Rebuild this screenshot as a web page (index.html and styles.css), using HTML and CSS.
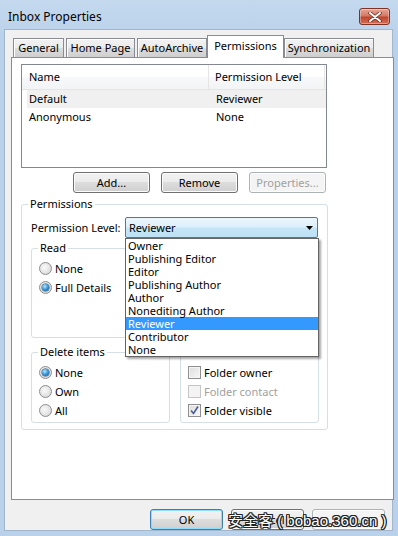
FILE: index.html
```html
<!DOCTYPE html>
<html lang="en">
  <head>
    <meta charset="UTF-8" />
    <title>Inbox Properties</title>
    <link rel="stylesheet" href="styles.css">
  </head>
  <body>
    <div class="window">
      <!-- Title bar -->
      <div class="titlebar">
        <span class="title">Inbox Properties</span>
        <div class="close">
          <svg width="14" height="10" viewBox="0 0 14 10">
            <path d="M2 1 L12 9 M12 1 L2 9" stroke="#6b2418" stroke-width="3.4" stroke-linecap="round" />
            <path d="M2 1 L12 9 M12 1 L2 9" stroke="#fff" stroke-width="2" stroke-linecap="round" />
          </svg>
        </div>
      </div>

      <div class="client">
        <!-- Tabs -->
        <div class="tabs">
          <div class="tab" style="width: 51px">General</div>
          <div class="tab" style="width: 69px">Home Page</div>
          <div class="tab" style="width: 70px">AutoArchive</div>
          <div class="tab active" style="width: 77px">Permissions</div>
          <div class="tab" style="width: 90px">Synchronization</div>
        </div>

        <div class="panel">
          <!-- Users list -->
          <div class="listview">
            <div class="lv-head">
              <div class="lv-col name">Name</div>
              <div class="lv-col level">Permission Level</div>
              <div class="lv-col rest"></div>
            </div>
            <div class="lv-row selected">
              <span class="name">Default</span><span>Reviewer</span>
            </div>
            <div class="lv-row">
              <span class="name">Anonymous</span><span>None</span>
            </div>
          </div>

          <div class="list-buttons">
            <button class="btn">Add...</button>
            <button class="btn">Remove</button>
            <button class="btn" disabled>Properties...</button>
          </div>

          <!-- Permissions -->
          <fieldset class="group perms">
            <legend>Permissions</legend>
            <div class="level-row">
              <span class="level-label">Permission Level:</span>
              <div class="combo">
                <div class="combo-box">
                  <span>Reviewer</span>
                  <svg width="7" height="4" viewBox="0 0 7 4"><path d="M0 0 H7 L3.5 4 Z" fill="#000" /></svg>
                </div>
                <ul class="combo-list">
                  <li>Owner</li>
                  <li>Publishing Editor</li>
                  <li>Editor</li>
                  <li>Publishing Author</li>
                  <li>Author</li>
                  <li>Nonediting Author</li>
                  <li class="current">Reviewer</li>
                  <li>Contributor</li>
                  <li>None</li>
                </ul>
              </div>
            </div>

            <div class="groups">
              <fieldset class="group sub">
                <legend>Read</legend>
                <div class="opt"><span class="radio"></span>None</div>
                <div class="opt"><span class="radio on"></span>Full Details</div>
              </fieldset>
              <fieldset class="group sub">
                <legend>Write</legend>
                <div class="opt"><span class="check"></span>Create items</div>
                <div class="opt"><span class="check"></span>Create subfolders</div>
                <div class="opt"><span class="check"></span>Edit own</div>
                <div class="opt"><span class="check"></span>Edit all</div>
              </fieldset>
              <fieldset class="group sub">
                <legend>Delete items</legend>
                <div class="opt"><span class="radio on"></span>None</div>
                <div class="opt"><span class="radio"></span>Own</div>
                <div class="opt"><span class="radio"></span>All</div>
              </fieldset>
              <fieldset class="group sub">
                <legend>Other</legend>
                <div class="opt"><span class="check"></span>Folder owner</div>
                <div class="opt disabled"><span class="check"></span>Folder contact</div>
                <div class="opt">
                  <span class="check">
                    <svg width="9" height="9" viewBox="0 0 9 9"><path d="M1 4.5 L3.5 7.5 L8 0.5" fill="none" stroke="#4a5f97" stroke-width="1.6" /></svg>
                  </span>Folder visible
                </div>
              </fieldset>
            </div>
          </fieldset>
        </div>

        <!-- Dialog buttons -->
        <div class="dialog-buttons">
          <button class="btn default">OK</button>
          <button class="btn">Cancel</button>
          <button class="btn" disabled>Apply</button>
        </div>
      </div>

      <div class="watermark">安全客 ( bobao.360.cn )</div>
    </div>
  </body>
</html>
```

FILE: styles.css
```css
body {
  margin: 0;
  font-family: "Noto Sans", "Open Sans", sans-serif;
  font-size: 11px;
  color: #000;
}

.window {
  position: relative;
  width: 398px;
  height: 536px;
  box-sizing: border-box;
  padding: 0 6px 6px 5px;
  background: linear-gradient(180deg, #c4d9ee, #b9d1ea 40px, #b9d1ea);
}

/* Title bar */
.titlebar {
  height: 30px;
  display: flex;
  align-items: center;
  justify-content: space-between;
  padding: 0 2px 0 3px;
}

.title {
  font-size: 12px;
  margin-top: 2px;
}

.close {
  width: 29px;
  height: 15px;
  margin-top: 3px;
  border: 1px solid #7d3324;
  border-radius: 3px;
  display: flex;
  align-items: center;
  justify-content: center;
  background: linear-gradient(180deg, #e8a596 0%, #d27b66 45%, #c2452c 55%, #d0705a 100%);
  box-shadow: inset 0 0 0 1px rgba(255, 255, 255, 0.35);
}

/* Client area */
.client {
  height: 500px;
  background: #f0f0f0;
  box-shadow: 0 0 0 1px #a3b7cc;
  padding: 0 7px 0 6px;
}

.tabs {
  height: 27px;
  display: flex;
  align-items: flex-end;
  padding-left: 2px;
}

.tab {
  height: 19px;
  margin-right: 2px;
  border: 1px solid #898c95;
  border-bottom: none;
  background: linear-gradient(180deg, #f2f2f2, #ebebeb 50%, #dddddd 50%, #cfcfcf);
  box-shadow: inset 1px 1px 0 #fff;
  text-align: center;
  line-height: 18px;
  box-sizing: border-box;
}

.tab:nth-child(3) {
  margin-right: 0;
}

.tab.active {
  height: 23px;
  margin: 0 0 -1px;
  line-height: 20px;
  background: #fff;
  box-shadow: none;
  position: relative;
  z-index: 1;
}

.panel {
  width: 372px;
  height: 435px;
  background: #fff;
  border: 1px solid #898c95;
  padding: 6px 0 0 9px;
  box-sizing: content-box;
}

.panel > * {
  box-sizing: border-box;
}

/* List view */
.listview {
  width: 306px;
  height: 104px;
  border: 1px solid #828790;
}

.lv-head {
  display: flex;
  height: 24px;
  border-bottom: 1px solid #e5e5e5;
  background: linear-gradient(180deg, #fff, #fff 50%, #f7f8f9 50%, #f3f4f6);
}

.lv-col {
  line-height: 24px;
  border-right: 1px solid #e5e5e5;
  box-sizing: border-box;
}

.lv-col.name {
  width: 187px;
  padding-left: 7px;
}

.lv-col.level {
  width: 116px;
  padding-left: 6px;
}

.lv-col.rest {
  flex: 1;
  border-right: none;
}

.lv-row {
  display: flex;
  height: 18px;
  line-height: 18px;
  margin-left: 5px;
  padding-left: 2px;
}

.lv-row .name {
  width: 187px;
}

.lv-row.selected {
  background: #f0f0f0;
}

.list-buttons {
  width: 306px;
  display: flex;
  justify-content: flex-end;
  gap: 11px;
  margin-top: 4px;
  padding-right: 1px;
}

/* Buttons */
.btn {
  width: 77px;
  height: 21px;
  padding: 0;
  font: inherit;
  color: #000;
  border: 1px solid #707070;
  border-radius: 3px;
  background: linear-gradient(180deg, #f2f2f2, #ebebeb 50%, #dddddd 50%, #cfcfcf);
  box-shadow: inset 0 0 0 1px #fcfcfc;
}

.btn:disabled {
  color: #a0a0a0;
  border-color: #adb2b5;
  background: #f4f4f4;
}

.btn.default {
  border-color: #3c7fb1;
  box-shadow: inset 0 0 0 1px #8fdbfb;
}

/* Group boxes */
.group {
  margin: 0;
  border: 1px solid #d5dfe5;
  border-radius: 3px;
}

.group legend {
  padding: 0 2px;
  line-height: 16px;
}

.perms {
  width: 306px;
  margin-top: 3px;
  padding: 5px 8px 6px 9px;
}

.perms > legend {
  margin-left: -3px;
}

.level-row {
  display: flex;
  align-items: center;
  height: 21px;
}

.level-label {
  width: 94px;
}

.combo {
  position: relative;
  width: 193px;
}

.combo-box {
  height: 21px;
  box-sizing: border-box;
  border: 1px solid #3c7fb1;
  border-radius: 2px;
  background: linear-gradient(180deg, #ecf6fc, #dcf0fb 45%, #c4e5f6 55%, #bde1f5);
  display: flex;
  align-items: center;
  justify-content: space-between;
  padding: 0 4px 0 3px;
}

.combo-list {
  position: absolute;
  top: 100%;
  left: 0;
  z-index: 2;
  width: 194px;
  box-sizing: border-box;
  margin: 0;
  padding: 0;
  list-style: none;
  background: #fff;
  border: 1px solid #646464;
  box-shadow: 2px 2px 2px rgba(0, 0, 0, 0.35);
}

.combo-list li {
  height: 13px;
  line-height: 13px;
  padding-left: 2px;
}

.combo-list li.current {
  background: #3399ff;
  color: #fff;
}

.groups {
  display: grid;
  grid-template-columns: 139px 139px;
  column-gap: 10px;
  row-gap: 6px;
  margin-top: 2px;
}

.sub {
  padding: 3px 7px 2px;
}

.sub legend {
  margin-left: -1px;
}

.opt {
  display: flex;
  align-items: center;
  gap: 3px;
  height: 19px;
}

.opt.disabled {
  color: #a0a0a0;
}

/* Radio buttons and checkboxes */
.radio {
  width: 13px;
  height: 13px;
  box-sizing: border-box;
  border-radius: 50%;
  border: 1px solid #8d8d8d;
  background: radial-gradient(circle at 40% 40%, #fafafa, #e2e2e2 60%, #cfcfcf);
  display: flex;
  align-items: center;
  justify-content: center;
}

.radio.on::after {
  content: "";
  width: 7px;
  height: 7px;
  border-radius: 50%;
  background: radial-gradient(circle at 40% 35%, #b6e7ff, #2d8bd0 55%, #0d4f86);
  box-shadow: 0 0 0 0.5px #174a73;
}

.check {
  width: 13px;
  height: 13px;
  box-sizing: border-box;
  border: 1px solid #8f8f8f;
  background: linear-gradient(135deg, #dcdcdc, #f8f8f8);
  box-shadow: inset 0 0 0 1px #f4f4f4;
  display: flex;
  align-items: center;
  justify-content: center;
}

.opt.disabled .check {
  border-color: #c5c5c5;
  background: #f4f4f4;
}

.dialog-buttons {
  display: flex;
  justify-content: flex-end;
  gap: 8px;
  margin-top: 9px;
}

.dialog-buttons .btn {
  width: 73px;
}

/* Watermark over the bottom buttons */
.watermark {
  position: absolute;
  left: 228px;
  top: 509px;
  font-family: "Liberation Sans", "Noto Sans CJK SC", sans-serif;
  font-size: 15px;
  color: #fff;
  white-space: nowrap;
  text-shadow: 1px 0 0 #222, -1px 0 0 #222, 0 1px 0 #222, 0 -1px 0 #222, 1px 1px 0 #222, -1px -1px 0 #222, 1px -1px 0 #222, -1px 1px 0 #222;
}
```
